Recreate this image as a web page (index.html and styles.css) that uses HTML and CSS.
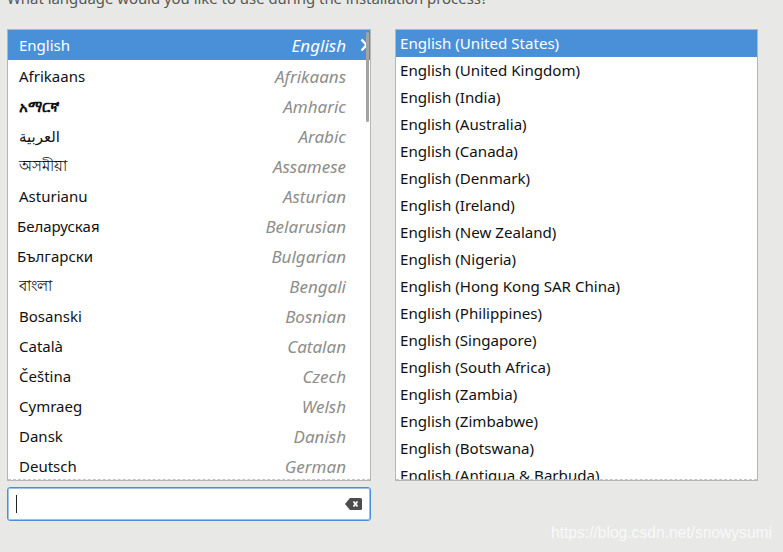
FILE: index.html
```html
<!DOCTYPE html>
<html>
<head>
<meta charset="utf-8">
<link rel="stylesheet" href="styles.css">
</head>
<body>
<div class="title">What language would you like to use during the installation process?</div>
<div class="main">
  <div class="left-col">
    <div class="panel lang-panel">
      <div class="scroller">
        <div class="lrow selected"><span class="native">English</span><span class="eng">English</span>
          <svg class="chev" width="8" height="14" viewBox="0 0 8 14"><polyline points="1.5,1.5 6.5,7 1.5,12.5" fill="none" stroke="#fff" stroke-width="2.4"/></svg>
        </div>
        <div class="lrow"><span class="native">Afrikaans</span><span class="eng">Afrikaans</span></div>
        <div class="lrow"><span class="native bold">አማርኛ</span><span class="eng">Amharic</span></div>
        <div class="lrow"><span class="native">العربية</span><span class="eng">Arabic</span></div>
        <div class="lrow"><span class="native">অসমীয়া</span><span class="eng">Assamese</span></div>
        <div class="lrow"><span class="native">Asturianu</span><span class="eng">Asturian</span></div>
        <div class="lrow"><span class="native cyr">Беларуская</span><span class="eng">Belarusian</span></div>
        <div class="lrow"><span class="native cyr">Български</span><span class="eng">Bulgarian</span></div>
        <div class="lrow"><span class="native">বাংলা</span><span class="eng">Bengali</span></div>
        <div class="lrow"><span class="native">Bosanski</span><span class="eng">Bosnian</span></div>
        <div class="lrow"><span class="native">Català</span><span class="eng">Catalan</span></div>
        <div class="lrow"><span class="native">Čeština</span><span class="eng">Czech</span></div>
        <div class="lrow"><span class="native">Cymraeg</span><span class="eng">Welsh</span></div>
        <div class="lrow"><span class="native">Dansk</span><span class="eng">Danish</span></div>
        <div class="lrow"><span class="native">Deutsch</span><span class="eng">German</span></div>
      </div>
      <div class="scrollbar"></div>
      <div class="undershoot"></div>
    </div>
    <div class="search">
      <span class="cursor"></span>
      <svg class="clear" width="17" height="12" viewBox="0 0 17 12"><path d="M5 0 H15.5 A1.5 1.5 0 0 1 17 1.5 V10.5 A1.5 1.5 0 0 1 15.5 12 H5 L0 6 Z" fill="#4d4d4d"/><path d="M8.5 3.5 L12.5 8.5 M12.5 3.5 L8.5 8.5" stroke="#fff" stroke-width="1.8"/></svg>
    </div>
  </div>
  <div class="panel locale-panel">
    <div class="scroller">
      <div class="rrow selected">English (United States)</div>
      <div class="rrow">English (United Kingdom)</div>
      <div class="rrow">English (India)</div>
      <div class="rrow">English (Australia)</div>
      <div class="rrow">English (Canada)</div>
      <div class="rrow">English (Denmark)</div>
      <div class="rrow">English (Ireland)</div>
      <div class="rrow">English (New Zealand)</div>
      <div class="rrow">English (Nigeria)</div>
      <div class="rrow">English (Hong Kong SAR China)</div>
      <div class="rrow">English (Philippines)</div>
      <div class="rrow">English (Singapore)</div>
      <div class="rrow">English (South Africa)</div>
      <div class="rrow">English (Zambia)</div>
      <div class="rrow">English (Zimbabwe)</div>
      <div class="rrow">English (Botswana)</div>
      <div class="rrow">English (Antigua &amp; Barbuda)</div>
    </div>
    <div class="undershoot"></div>
  </div>
</div>
<div class="watermark">https://blog.csdn.net/snowysumi</div>
</body>
</html>
```

FILE: styles.css
```css
html, body {
  margin: 0;
  padding: 0;
  background: #e8e8e7;
  width: 783px;
  height: 552px;
  overflow: hidden;
  font-family: "Noto Sans", "DejaVu Sans", sans-serif;
  font-size: 15px;
  color: #2e3436;
}
.title {
  margin: -11px 0 0 7px;
  height: 18px;
  line-height: 18px;
  font-size: 14.9px;
  color: #555753;
  white-space: nowrap;
}
.main {
  display: flex;
  padding-left: 7px;
  margin-top: 22px;
  gap: 24px;
}
.left-col {
  width: 364px;
  display: flex;
  flex-direction: column;
  gap: 6px;
}
.panel {
  position: relative;
  height: 450px;
  border: 1px solid #b6b6b3;
  background: #fff;
  overflow: hidden;
}
.lang-panel {
  width: 362px;
}
.locale-panel {
  width: 361px;
}
.scroller {
  height: 450px;
  overflow: hidden;
}
.lrow {
  height: 30px;
  display: flex;
  align-items: center;
  justify-content: space-between;
  padding: 0 24px 0 11px;
  position: relative;
  color: #111;
}
.lrow.selected {
  background: #4a90d9;
  color: #fff;
  margin-bottom: 1px;
}
.lrow.selected .eng {
  color: #fff;
}
.native.bold {
  font-weight: bold;
}
.native.cyr {
  margin-left: -2px;
}
.eng {
  font-style: italic;
  font-size: 17px;
  color: #8d8d8b;
}
.chev {
  position: absolute;
  right: 2px;
  top: 8px;
}
.scrollbar {
  position: absolute;
  right: 1px;
  top: 2px;
  width: 3px;
  height: 90px;
  border-radius: 2px;
  background: #a4a4a2;
}
.undershoot {
  position: absolute;
  left: 0;
  right: 0;
  bottom: 0;
  border-bottom: 1px dashed #c4c4c2;
}
.rrow {
  height: 27px;
  line-height: 27px;
  padding-left: 4px;
  font-size: 15.1px;
  color: #111;
  white-space: nowrap;
}
.rrow.selected {
  background: #4a90d9;
  color: #fff;
}
.search {
  box-sizing: border-box;
  height: 34px;
  width: 364px;
  background: #fff;
  border: 1px solid #4a90d9;
  box-shadow: inset 0 0 0 1px rgba(74, 144, 217, 0.55);
  border-radius: 3px;
  display: flex;
  align-items: center;
  justify-content: space-between;
  padding: 0 8px 0 8px;
}
.cursor {
  width: 1px;
  height: 18px;
  background: #222;
}
.clear {
  display: block;
}
.watermark {
  position: absolute;
  left: 551px;
  top: 524px;
  font-family: "Liberation Sans", Arial, sans-serif;
  font-size: 15.6px;
  color: rgba(255, 255, 255, 0.75);
  white-space: nowrap;
}
```
